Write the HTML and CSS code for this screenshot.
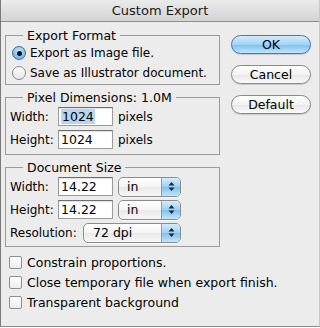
FILE: index.html
```html
<!DOCTYPE html>
<html>
<head>
<meta charset="utf-8">
<link rel="stylesheet" href="styles.css">
</head>
<body>
<div class="window">
  <div class="titlebar">Custom Export</div>
  <div class="content">
    <div class="left">
      <fieldset class="group g-format">
        <legend>Export Format</legend>
        <div class="radio-row"><span class="radio on"></span><span>Export as Image file.</span></div>
        <div class="radio-row"><span class="radio"></span><span>Save as Illustrator document.</span></div>
      </fieldset>
      <fieldset class="group g-pixel">
        <legend>Pixel Dimensions: 1.0M</legend>
        <div class="field-row"><span class="lbl">Width:</span><span class="input"><span class="sel">1024</span></span><span class="unit">pixels</span></div>
        <div class="field-row"><span class="lbl">Height:</span><span class="input">1024</span><span class="unit">pixels</span></div>
      </fieldset>
      <fieldset class="group g-doc">
        <legend>Document Size</legend>
        <div class="field-row"><span class="lbl">Width:</span><span class="input">14.22</span><span class="popup small"><span class="ptext">in</span><span class="stepper"><svg width="7" height="11" viewBox="0 0 7 11"><path d="M3.5 1 L6.5 4.5 L0.5 4.5 Z M3.5 10 L6.5 6.5 L0.5 6.5 Z" fill="#1a2a3a"/></svg></span></span></div>
        <div class="field-row"><span class="lbl">Height:</span><span class="input">14.22</span><span class="popup small"><span class="ptext">in</span><span class="stepper"><svg width="7" height="11" viewBox="0 0 7 11"><path d="M3.5 1 L6.5 4.5 L0.5 4.5 Z M3.5 10 L6.5 6.5 L0.5 6.5 Z" fill="#1a2a3a"/></svg></span></span></div>
        <div class="field-row"><span class="lbl wide">Resolution:</span><span class="popup big"><span class="ptext">72 dpi</span><span class="stepper"><svg width="7" height="11" viewBox="0 0 7 11"><path d="M3.5 1 L6.5 4.5 L0.5 4.5 Z M3.5 10 L6.5 6.5 L0.5 6.5 Z" fill="#1a2a3a"/></svg></span></span></div>
      </fieldset>
      <div class="checks">
        <div class="check-row"><span class="checkbox"></span><span>Constrain proportions.</span></div>
        <div class="check-row"><span class="checkbox"></span><span>Close temporary file when export finish.</span></div>
        <div class="check-row"><span class="checkbox"></span><span>Transparent background</span></div>
      </div>
    </div>
    <div class="buttons">
      <div class="btn primary">OK</div>
      <div class="btn">Cancel</div>
      <div class="btn">Default</div>
    </div>
  </div>
</div>
</body>
</html>
```

FILE: styles.css
```css
* { box-sizing: border-box; }
html, body { margin: 0; padding: 0; }
body {
  width: 320px;
  height: 328px;
  background: #ffffff;
  font-family: "DejaVu Sans", "Lucida Grande", sans-serif;
  font-size: 12px;
  color: #000;
}
.window {
  width: 320px;
  height: 327px;
  background: #ececec;
  border-left: 1px solid #7a7a7a;
  border-right: 1px solid #c8c8c8;
  border-bottom: 1px solid #8a8a8a;
  display: flex;
  flex-direction: column;
}
.titlebar {
  height: 22px;
  line-height: 21px;
  text-align: center;
  font-size: 13px;
  color: #1a1a1a;
  background: linear-gradient(#ebebeb, #d3d3d3);
  border-bottom: 1px solid #8f8f8f;
}
.content {
  display: flex;
  align-items: flex-start;
  padding-left: 4px;
}
.left {
  width: 215px;
  display: flex;
  flex-direction: column;
}
.group {
  margin: 5px 0 0 0;
  padding: 0;
  border: 1px solid #9b9b9b;
  min-width: 0;
}
.group legend {
  margin-left: 17px;
  padding: 0 4px;
  line-height: 15px;
  font-size: 12.5px;
}
.g-format { margin-top: 6px; padding-bottom: 1px; }
.g-pixel { padding-bottom: 3px; }
.g-doc { padding-bottom: 2px; }

.radio-row {
  height: 20px;
  display: flex;
  align-items: center;
  gap: 4px;
  padding-left: 6px;
  white-space: nowrap;
}
.radio {
  width: 14px;
  height: 14px;
  border-radius: 50%;
  border: 1px solid #8a8a8a;
  background: linear-gradient(#ffffff, #e6e6e6);
  display: flex;
  align-items: center;
  justify-content: center;
}
.radio.on {
  border-color: #3f6aa0;
  background: radial-gradient(circle at 50% 35%, #cde8fb 0%, #86c2ef 55%, #5aa4e2 100%);
}
.radio.on::after {
  content: "";
  width: 5px;
  height: 5px;
  border-radius: 50%;
  background: #111;
}

.field-row {
  height: 23px;
  display: flex;
  align-items: center;
  padding-left: 4px;
  white-space: nowrap;
}
.lbl { width: 48px; }
.lbl.wide { width: 73px; }
.input {
  width: 55px;
  height: 19px;
  background: #fff;
  border: 1px solid #9a9a9a;
  border-top-color: #6e6e6e;
  box-shadow: inset 0 1px 1px rgba(0,0,0,0.12);
  padding-left: 2px;
  line-height: 17px;
  font-size: 12.5px;
}
.sel { background: #b7d6f3; padding: 0 1px; display: inline-block; line-height: 15px; }
.unit { margin-left: 5px; }

.popup {
  height: 20px;
  display: flex;
  align-items: stretch;
  border: 1px solid #8c8c8c;
  border-radius: 5px;
  background: linear-gradient(#ffffff 0%, #f4f4f4 50%, #e9e9e9 51%, #f7f7f7 100%);
  overflow: hidden;
  margin-left: 5px;
  box-shadow: 0 1px 0 rgba(255,255,255,0.6);
}
.popup.small { width: 63px; }
.popup.big { width: 98px; margin-left: 0; }
.ptext {
  flex: 1;
  padding-left: 8px;
  line-height: 18px;
  font-size: 12.5px;
}
.popup.big .ptext { padding-left: 9px; }
.stepper {
  width: 19px;
  border-left: 1px solid #7f9fc4;
  background: linear-gradient(#d6ecfb 0%, #9ccff3 50%, #80c0ee 51%, #c2e6fb 100%);
  display: flex;
  align-items: center;
  justify-content: center;
}

.checks {
  margin-top: 5px;
  display: flex;
  flex-direction: column;
}
.check-row {
  height: 20px;
  display: flex;
  align-items: center;
  gap: 5px;
  padding-left: 4px;
  font-size: 12.5px;
  white-space: nowrap;
}
.checkbox {
  width: 13px;
  height: 13px;
  flex: none;
  border: 1px solid #8f8f8f;
  border-radius: 2px;
  background: linear-gradient(#ffffff, #ececec);
}

.buttons {
  margin-left: 11px;
  padding-top: 13px;
  display: flex;
  flex-direction: column;
  gap: 11px;
}
.btn {
  width: 80px;
  height: 19px;
  border-radius: 10px;
  border: 1px solid #8a8a8a;
  background: linear-gradient(#ffffff 0%, #f3f3f3 50%, #e6e6e6 51%, #fafafa 100%);
  text-align: center;
  line-height: 17px;
  font-size: 12.5px;
  box-shadow: 0 1px 1px rgba(0,0,0,0.15);
}
.btn.primary {
  border-color: #4a77ad;
  background: linear-gradient(#d3ebfb 0%, #a3d3f5 50%, #7cbff0 51%, #bfe6fc 100%);
}
```
